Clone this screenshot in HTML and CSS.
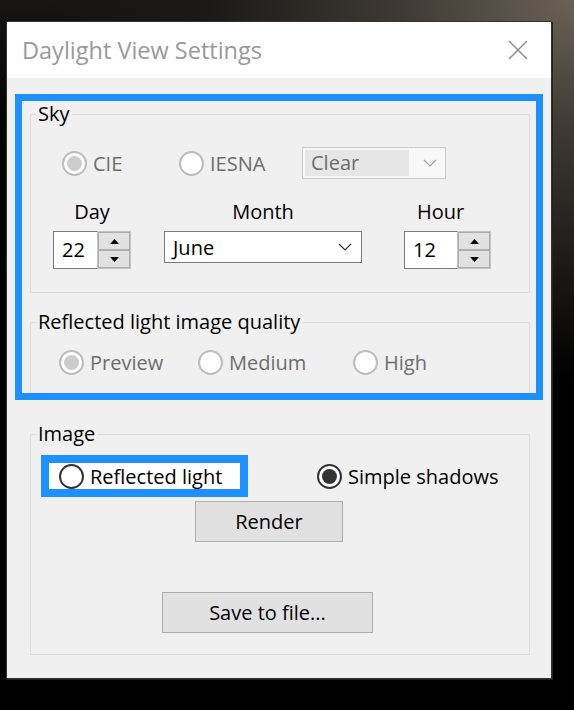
FILE: index.html
```html
<!DOCTYPE html>
<html lang="en">
<head>
    <meta charset="UTF-8">
    <meta name="viewport" content="width=device-width, initial-scale=1.0">
    <title>Daylight View Settings</title>
    <link rel="stylesheet" href="styles.css">
</head>
<body>
    <div class="window">
        <div class="titlebar">
            <span class="title">Daylight View Settings</span>
            <svg class="close" width="20" height="20" viewBox="0 0 20 20">
                <path d="M1 1 L19 19 M19 1 L1 19" stroke="#8e8e8e" stroke-width="1.5" fill="none"/>
            </svg>
        </div>
        <div class="client">
            <div class="focus-box">
                <fieldset class="group sky">
                    <legend>Sky</legend>
                    <div class="sky-row">
                        <label class="radio disabled cie"><span class="dot checked"></span>CIE</label>
                        <label class="radio disabled iesna"><span class="dot"></span>IESNA</label>
                        <div class="combo disabled">
                            <span class="combo-text">Clear</span>
                            <svg class="chevron" width="14" height="8" viewBox="0 0 14 8">
                                <path d="M1 1 L7 7 L13 1" stroke="#a0a0a0" stroke-width="1.2" fill="none"/>
                            </svg>
                        </div>
                    </div>
                    <div class="date-row">
                        <div class="field day">
                            <span class="field-label">Day</span>
                            <div class="spin">
                                <span class="spin-value">22</span>
                                <div class="spin-buttons">
                                    <span class="spin-btn"><svg width="9" height="5" viewBox="0 0 9 5"><path d="M0 5 L4.5 0 L9 5 Z" fill="#000"/></svg></span>
                                    <span class="spin-btn"><svg width="9" height="5" viewBox="0 0 9 5"><path d="M0 0 L4.5 5 L9 0 Z" fill="#000"/></svg></span>
                                </div>
                            </div>
                        </div>
                        <div class="field month">
                            <span class="field-label">Month</span>
                            <div class="combo">
                                <span class="combo-text">June</span>
                                <svg class="chevron" width="14" height="8" viewBox="0 0 14 8">
                                    <path d="M1 1 L7 7 L13 1" stroke="#333" stroke-width="1.2" fill="none"/>
                                </svg>
                            </div>
                        </div>
                        <div class="field hour">
                            <span class="field-label">Hour</span>
                            <div class="spin">
                                <span class="spin-value">12</span>
                                <div class="spin-buttons">
                                    <span class="spin-btn"><svg width="9" height="5" viewBox="0 0 9 5"><path d="M0 5 L4.5 0 L9 5 Z" fill="#000"/></svg></span>
                                    <span class="spin-btn"><svg width="9" height="5" viewBox="0 0 9 5"><path d="M0 0 L4.5 5 L9 0 Z" fill="#000"/></svg></span>
                                </div>
                            </div>
                        </div>
                    </div>
                </fieldset>

                <fieldset class="group quality">
                    <legend>Reflected light image quality</legend>
                    <div class="quality-row">
                        <label class="radio disabled preview"><span class="dot checked"></span>Preview</label>
                        <label class="radio disabled medium"><span class="dot"></span>Medium</label>
                        <label class="radio disabled high"><span class="dot"></span>High</label>
                    </div>
                </fieldset>
            </div>

            <fieldset class="group image">
                <legend>Image</legend>
                <div class="image-row">
                    <div class="focus-ring">
                        <label class="radio"><span class="dot"></span>Reflected light</label>
                    </div>
                    <label class="radio shadows"><span class="dot checked"></span>Simple shadows</label>
                </div>
                <button class="btn render">Render</button>
                <button class="btn save">Save to file...</button>
            </fieldset>
        </div>
    </div>
</body>
</html>
```

FILE: styles.css
```css
html, body {
    margin: 0;
    height: 710px;
    overflow: hidden;
}
body {
    font-family: "Open Sans", "Noto Sans", sans-serif;
    font-size: 20px;
    color: #000;
    background:
        radial-gradient(ellipse 520px 380px at 100% 0%, #6a6256 0, #3d3832 35%, #1c1a18 70%, rgba(0, 0, 0, 0) 100%),
        linear-gradient(to bottom, #161514 0, #050505 120px, #000 300px);
}
.window {
    margin: 21px 0 0 6px;
    width: 544px;
    border: 1px solid #333;
    background-color: #f0f0f0;
    box-shadow: 1px 1px 0 #222;
}
.titlebar {
    height: 56px;
    background-color: #fff;
    display: flex;
    align-items: center;
    justify-content: space-between;
    padding: 0 23px 0 15px;
}
.title {
    font-size: 23.5px;
    color: #999;
}
.close {
    display: block;
}
.client {
    padding: 16px 8px 23px;
}
.focus-box {
    border: 7px solid #1e90ff;
    padding: 0 6px 0 8px;
}
.group {
    margin: 0;
    padding: 0;
    min-width: 0;
    border: 1px solid #dcdcdc;
}
.group legend {
    margin-left: 5px;
    padding: 0 2px;
    line-height: 26px;
}
.radio {
    display: flex;
    align-items: center;
    gap: 6px;
    height: 26px;
    flex-shrink: 0;
}
.dot {
    width: 25px;
    height: 25px;
    box-sizing: border-box;
    border: 2px solid #333;
    border-radius: 50%;
    background-color: #fff;
    display: flex;
    align-items: center;
    justify-content: center;
}
.dot.checked::after {
    content: "";
    width: 15px;
    height: 15px;
    border-radius: 50%;
    background-color: #333;
}
.radio.disabled {
    color: #6d6d6d;
}
.radio.disabled .dot {
    border-color: #bcbcbc;
}
.radio.disabled .dot.checked::after {
    background-color: #cccccc;
}

/* Sky */
.sky-row {
    display: flex;
    align-items: center;
    height: 32px;
    margin-top: 20px;
    padding-left: 31px;
}
.cie {
    width: 117px;
}
.iesna {
    width: 123px;
}
.combo {
    display: flex;
    align-items: center;
    justify-content: space-between;
    box-sizing: border-box;
    height: 32px;
    border: 1px solid #7a7a7a;
    background-color: #fff;
    padding: 0 9px 0 8px;
}
.combo.disabled {
    width: 144px;
    border-color: #cccccc;
    background-color: #f8f8f8;
    padding: 2px 8px 2px 2px;
    color: #6d6d6d;
}
.combo.disabled .combo-text {
    width: 98px;
    height: 26px;
    line-height: 26px;
    padding-left: 6px;
    background-color: #e6e6e6;
}
.chevron {
    display: block;
}
.date-row {
    display: flex;
    align-items: flex-start;
    margin-top: 20px;
    padding-left: 22px;
}
.field {
    display: flex;
    flex-direction: column;
    gap: 6px;
}
.field-label {
    line-height: 26px;
    text-align: center;
}
.day {
    width: 78px;
}
.month {
    width: 198px;
    margin-left: 33px;
}
.month .combo {
    width: 198px;
}
.hour {
    width: 87px;
    margin-left: 42px;
}
.hour .field-label {
    text-align: left;
    padding-left: 13px;
}
.spin {
    display: flex;
    height: 38px;
}
.spin-value {
    flex: 1;
    border: 1px solid #7a7a7a;
    border-right: none;
    background-color: #fff;
    padding-left: 8px;
    line-height: 36px;
}
.spin-buttons {
    width: 34px;
    box-sizing: border-box;
    border: 1px solid #c2c2c2;
    display: flex;
    flex-direction: column;
}
.spin-btn {
    flex: 1;
    background-color: #e1e1e1;
    border: 1px solid #adadad;
    display: flex;
    align-items: center;
    justify-content: center;
}
.spin-btn svg {
    display: block;
}
.sky {
    padding-bottom: 23px;
}

/* Reflected light image quality */
.quality {
    margin-top: 16px;
    border-bottom: none;
    padding-bottom: 18px;
}
.quality-row {
    display: flex;
    margin-top: 14px;
    padding-left: 28px;
}
.preview {
    width: 139px;
}
.medium {
    width: 155px;
}

/* Image */
.image {
    margin: 21px 13px 0 15px;
    padding-bottom: 21px;
}
.image-row {
    display: flex;
    align-items: center;
    margin-top: 8px;
    padding-left: 10px;
}
.focus-ring {
    width: 207px;
    height: 42px;
    box-sizing: border-box;
    border: 8px solid #1e90ff;
    background-color: #fff;
    padding-left: 10px;
    display: flex;
    align-items: center;
}
.shadows {
    margin-left: 69px;
}
.btn {
    display: block;
    height: 41px;
    font: inherit;
    color: #000;
    background-color: #e1e1e1;
    border: 1px solid #adadad;
    padding: 0;
}
.render {
    width: 148px;
    margin: 4px 0 0 164px;
}
.save {
    width: 211px;
    margin: 50px 0 0 131px;
}
```
